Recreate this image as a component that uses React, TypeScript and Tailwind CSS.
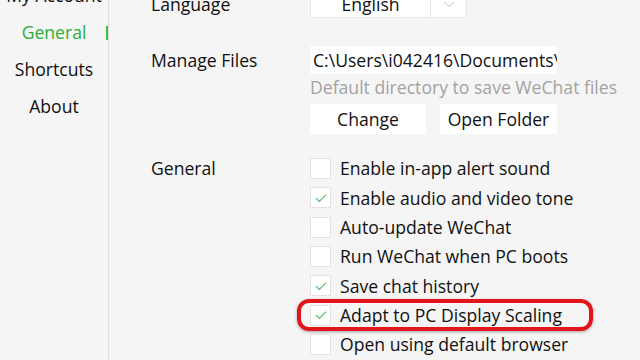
import React from 'react';

const navItems = ['My Account', 'General', 'Shortcuts', 'About'];

const options = [
  { label: 'Enable in-app alert sound', checked: false },
  { label: 'Enable audio and video tone', checked: true },
  { label: 'Auto-update WeChat', checked: false },
  { label: 'Run WeChat when PC boots', checked: false },
  { label: 'Save chat history', checked: true },
  { label: 'Adapt to PC Display Scaling', checked: true, highlight: true },
  { label: 'Open using default browser', checked: false },
];

const Check: React.FC = () => (
  <svg width="14" height="14" viewBox="0 0 14 14" fill="none">
    <path d="M2 7.2 L5.4 10.4 L12 3.6" stroke="#5fbf6a" strokeWidth="1.3" />
  </svg>
);

const App: React.FC = () => {
  return (
    <div
      className="w-[640px] h-[360px] overflow-hidden bg-[#f5f5f5] flex text-[#111111] text-[17.6px]"
      style={{ fontFamily: '"Open Sans", "Noto Sans", sans-serif' }}
    >
      {/* Sidebar */}
      <div className="w-[109px] shrink-0 border-r border-[#dedede] relative">
        <div className="mt-[-23px] flex flex-col">
          {navItems.map((item) => (
            <div
              key={item}
              className={`h-[37px] flex items-center justify-center whitespace-nowrap ${
                item === 'General' ? 'text-[#2aae3a]' : ''
              }`}
            >
              {item}
            </div>
          ))}
        </div>
        <div className="absolute left-[106px] top-[26px] w-[2px] h-[14px] bg-[#3cc04a]" />
      </div>

      {/* Content */}
      <div className="flex-1 pl-[42px] flex flex-col">
        {/* Language */}
        <div className="flex mt-[-10px] h-[28px] items-center">
          <div className="w-[159px]">Language</div>
          <div className="flex h-[28px] bg-white border border-[#e6e6e6]">
            <div className="w-[119px] flex items-center justify-center">English</div>
            <div className="w-[36px] border-l border-[#e6e6e6] flex items-start justify-center pt-[10px]">
              <svg width="12" height="7" viewBox="0 0 12 7" fill="none">
                <path d="M1 1 L6 5.5 L11 1" stroke="#c4c4c4" strokeWidth="1" />
              </svg>
            </div>
          </div>
        </div>

        {/* Manage Files */}
        <div className="flex mt-[28px]">
          <div className="w-[159px] h-[28px] flex items-center">Manage Files</div>
          <div className="flex flex-col">
            <div className="w-[247px] h-[28px] bg-white flex items-center pl-[3px] overflow-hidden whitespace-nowrap">
              C:\Users\i042416\Documents\WeChat Files
            </div>
            <div className="h-[26px] flex items-center text-[#a3a3a3] whitespace-nowrap">
              Default directory to save WeChat files
            </div>
            <div className="flex gap-[14px] mt-[4px]">
              <div className="w-[116px] h-[30px] bg-white flex items-center justify-center">Change</div>
              <div className="w-[117px] h-[30px] bg-white flex items-center justify-center">Open Folder</div>
            </div>
          </div>
        </div>

        {/* General */}
        <div className="flex mt-[20px]">
          <div className="w-[159px] h-[29.3px] flex items-center">General</div>
          <div className="flex flex-col">
            {options.map((o) => (
              <div key={o.label} className="relative h-[29.3px] flex items-center gap-[9px] whitespace-nowrap">
                {o.highlight && (
                  <div className="absolute left-[-13px] top-[-1px] w-[296px] h-[32px] border-[4px] border-[#e2141c] rounded-[12px] shadow-[0_1px_3px_rgba(0,0,0,0.35)]" />
                )}
                <div className="w-[21px] h-[21px] bg-white border border-[#e3e3e3] flex items-center justify-center">
                  {o.checked && <Check />}
                </div>
                <span>{o.label}</span>
              </div>
            ))}
          </div>
        </div>
      </div>
    </div>
  );
};

export default App;
